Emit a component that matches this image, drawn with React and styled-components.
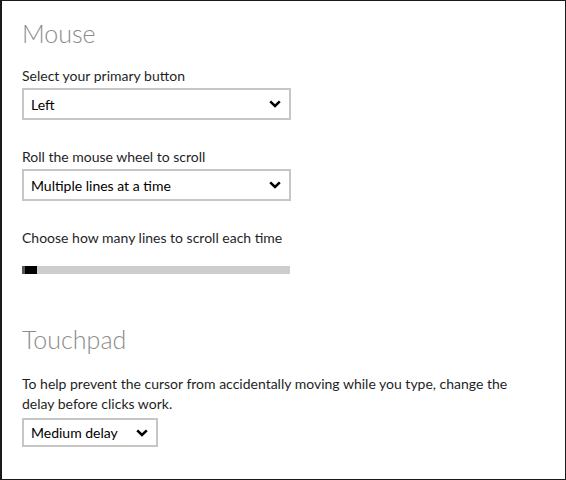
import React from 'react';
import styled, { createGlobalStyle } from 'styled-components';

const GlobalStyle = createGlobalStyle`
  html, body {
    margin: 0;
    padding: 0;
    background: #fff;
  }
  body {
    font-family: 'Segoe UI', Lato, 'Open Sans', sans-serif;
    color: #1f1f1f;
  }
`;

function Chevron() {
  return (
    <svg width='12' height='8' viewBox='0 0 12 8'>
      <path d='M1.2 1.4 L6 6 L10.8 1.4' fill='none' stroke='#000' strokeWidth='2.5' />
    </svg>
  );
}

function Dropdown({ value, compact }) {
  return (
    <Select $compact={compact}>
      <span>{value}</span>
      <Chevron />
    </Select>
  );
}

export default function App() {
  return (
    <>
      <GlobalStyle />
      <Frame>
        <Section>
          <Heading>Mouse</Heading>
          <Field $gap='15px'>
            <Label>Select your primary button</Label>
            <Dropdown value='Left' />
          </Field>
          <Field $gap='27px'>
            <Label>Roll the mouse wheel to scroll</Label>
            <Dropdown value='Multiple lines at a time' />
          </Field>
          <Field $gap='27px'>
            <Label>Choose how many lines to scroll each time</Label>
            <Track>
              <Thumb />
            </Track>
          </Field>
        </Section>
        <Section $touch>
          <Heading>Touchpad</Heading>
          <Paragraph>
            To help prevent the cursor from accidentally moving while you type, change the
            delay before clicks work.
          </Paragraph>
          <Dropdown value='Medium delay' compact />
        </Section>
      </Frame>
    </>
  );
}

const Frame = styled.div`
  box-sizing: border-box;
  width: 566px;
  height: 480px;
  border: 1px solid #1a1a1a;
  border-left-width: 2px;
  padding: 14px 0 0 20px;
  overflow: hidden;
`;

const Section = styled.section`
  display: flex;
  flex-direction: column;
  align-items: flex-start;
  margin-top: ${(p) => (p.$touch ? '47px' : '0')};
`;

const Heading = styled.h1`
  margin: 0;
  font-family: 'Segoe UI Light', Lato, sans-serif;
  font-weight: 300;
  font-size: 25px;
  line-height: 36px;
  color: #8c8c8c;
`;

const Field = styled.div`
  display: flex;
  flex-direction: column;
  align-items: flex-start;
  margin-top: ${(p) => p.$gap};
`;

const Label = styled.div`
  font-size: 14px;
  line-height: 20px;
  margin-bottom: 2px;
  white-space: nowrap;
`;

const Select = styled.div`
  box-sizing: border-box;
  display: flex;
  align-items: center;
  justify-content: space-between;
  gap: ${(p) => (p.$compact ? '18px' : '0')};
  width: ${(p) => (p.$compact ? 'auto' : '269px')};
  height: ${(p) => (p.$compact ? '29px' : '32px')};
  padding: 0 8px 0 7px;
  border: 2px solid #c6c6c6;
  font-size: 14px;
  color: #000;
  background: #fff;
`;

const Track = styled.div`
  position: relative;
  width: 268px;
  height: 8px;
  margin-top: 16px;
  background: #cdcdcd;
`;

const Thumb = styled.div`
  position: absolute;
  left: 0;
  top: 0;
  width: 15px;
  height: 8px;
  background: #000;
  border-left: 3px solid #555;
  box-sizing: border-box;
`;

const Paragraph = styled.p`
  margin: 17px 0 4px;
  font-size: 14px;
  line-height: 20px;
  width: 500px;
`;
